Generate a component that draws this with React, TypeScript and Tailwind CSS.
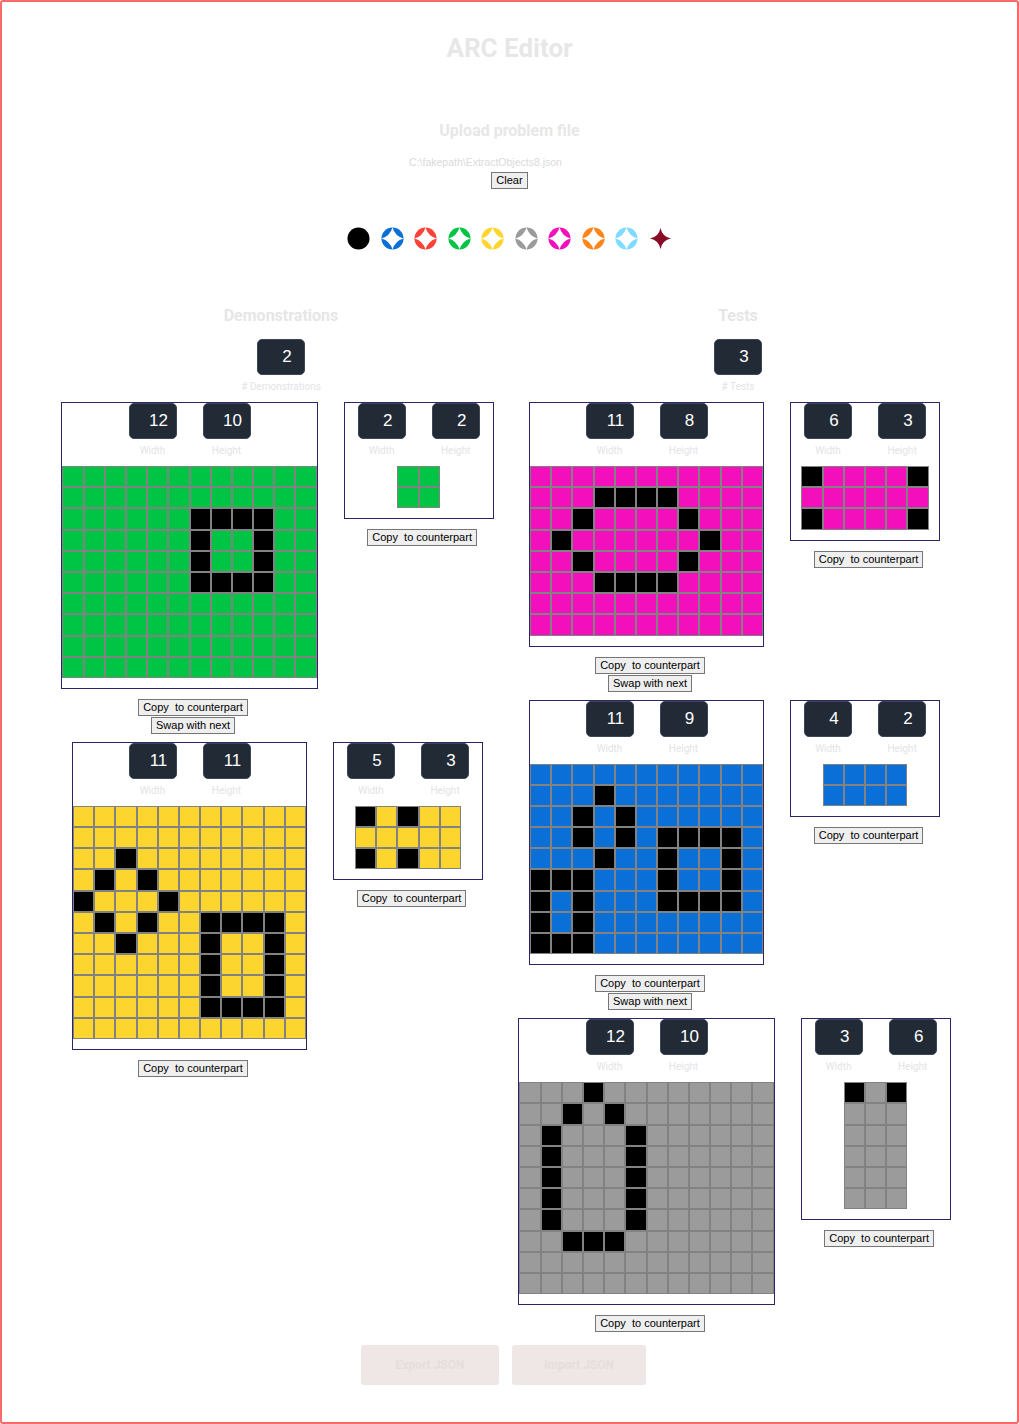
import { ReactNode } from "react";

const COLOR: Record<string, string> = {
  "0": "bg-black",
  "1": "bg-[#0a6fd6]",
  "3": "bg-[#00c443]",
  "4": "bg-[#fdd52f]",
  "5": "bg-[#9b9b9b]",
  "6": "bg-[#f30fbc]",
};

const fill = (w: number, h: number, c: string) =>
  Array.from({ length: h }, () => c.repeat(w));

const demos = [
  {
    input: [
      "333333333333",
      "333333333333",
      "333333000033",
      "333333033033",
      "333333033033",
      "333333000033",
      ...fill(12, 4, "3"),
    ],
    output: fill(2, 2, "3"),
  },
  {
    input: [
      "44444444444",
      "44444444444",
      "44044444444",
      "40404444444",
      "04440444444",
      "40404400004",
      "44044404404",
      "44444404404",
      "44444404404",
      "44444400004",
      "44444444444",
    ],
    output: ["04044", "44444", "04044"],
  },
];

const tests = [
  {
    input: [
      "66666666666",
      "66600006666",
      "66066660666",
      "60666666066",
      "66066660666",
      "66600006666",
      "66666666666",
      "66666666666",
    ],
    output: ["066660", "666666", "066660"],
  },
  {
    input: [
      "11111111111",
      "11101111111",
      "11010111111",
      "11010100001",
      "11101101101",
      "00011101101",
      "01011100001",
      "01011111111",
      "00011111111",
    ],
    output: fill(4, 2, "1"),
  },
  {
    input: [
      "555055555555",
      "550505555555",
      "505550555555",
      "505550555555",
      "505550555555",
      "505550555555",
      "505550555555",
      "550005555555",
      "555555555555",
      "555555555555",
    ],
    output: ["050", ...fill(3, 5, "5")],
  },
];

const palette = [
  { color: "#000000", kind: "solid" },
  { color: "#0a6fd6", kind: "ring" },
  { color: "#ff4136", kind: "ring" },
  { color: "#00c443", kind: "ring" },
  { color: "#fdd52f", kind: "ring" },
  { color: "#9b9b9b", kind: "ring" },
  { color: "#f30fbc", kind: "ring" },
  { color: "#ff851b", kind: "ring" },
  { color: "#7fdbff", kind: "ring" },
  { color: "#870c25", kind: "star" },
];

const STAR = "M12 0.5 Q14.6 9.4 23.5 12 Q14.6 14.6 12 23.5 Q9.4 14.6 0.5 12 Q9.4 9.4 12 0.5 Z";
const STAR_SOLID = "M12 1 Q13.8 10.2 23 12 Q13.8 13.8 12 23 Q10.2 13.8 1 12 Q10.2 10.2 12 1 Z";

const Swatch = ({ color, kind }: { color: string; kind: string }) => (
  <svg viewBox="0 0 24 24" className="w-[23px] h-[23px]">
    {kind !== "star" && <circle cx="12" cy="12" r="11.5" fill={color} />}
    {kind === "ring" && <path d={STAR} fill="#ffffff" />}
    {kind === "star" && <path d={STAR_SOLID} fill={color} />}
  </svg>
);

const NumBox = ({ value }: { value: number }) => (
  <input
    readOnly
    value={value}
    className="block w-[48px] h-[36px] rounded-[5px] bg-[#222a36] border border-[#3b4657] text-white text-[17px] text-center pl-3 font-['Liberation_Sans',sans-serif] outline-none"
  />
);

const Label = ({ children }: { children: ReactNode }) => (
  <span className="block text-[10px] leading-[12px] text-[#e3e4e6] font-['Roboto',sans-serif]">
    {children}
  </span>
);

const SmallButton = ({ children }: { children: ReactNode }) => (
  <button className="block h-[17px] px-[4px] text-[11px] leading-[13px] bg-[#efefef] border border-[#767676] text-black font-['Liberation_Sans',sans-serif] whitespace-pre">
    {children}
  </button>
);

const Grid = ({ rows }: { rows: string[] }) => (
  <div className="flex flex-col">
    {rows.map((row, y) => (
      <div key={y} className="flex">
        {row.split("").map((c, x) => (
          <div
            key={x}
            className={`w-[21.2px] h-[21.2px] border border-[#828282] ${COLOR[c]}`}
          />
        ))}
      </div>
    ))}
  </div>
);

const GridBox = ({ rows }: { rows: string[] }) => (
  <div className="min-w-[150px] border border-[#2b2566] bg-white flex flex-col items-center pb-[10px]">
    <div className="flex justify-center h-[63px]">
      <div className="w-[74px] flex flex-col items-center">
        <NumBox value={rows[0].length} />
        <div className="mt-[6px] flex">
          <Label>Width</Label>
        </div>
      </div>
      <div className="w-[74px] flex flex-col items-center">
        <NumBox value={rows.length} />
        <div className="mt-[6px] flex">
          <Label>Height</Label>
        </div>
      </div>
    </div>
    <Grid rows={rows} />
  </div>
);

interface PairProps {
  input: string[];
  output: string[];
  last: boolean;
}

const Pair = ({ input, output, last }: PairProps) => (
  <div className="flex items-start justify-center gap-[26px]">
    <div className="flex flex-col items-center">
      <GridBox rows={input} />
      <div className="mt-[10px] ml-[7px] flex flex-col items-center gap-[1px]">
        <SmallButton>Copy  to counterpart</SmallButton>
        {!last && <SmallButton>Swap with next</SmallButton>}
      </div>
    </div>
    <div className="flex flex-col items-center">
      <GridBox rows={output} />
      <div className="mt-[10px] ml-[7px] flex">
        <SmallButton>Copy  to counterpart</SmallButton>
      </div>
    </div>
  </div>
);

const Section = ({
  title,
  label,
  pairs,
}: {
  title: string;
  label: string;
  pairs: { input: string[]; output: string[] }[];
}) => (
  <div className="flex flex-col items-center">
    <h2 className="text-[16px] leading-[20px] font-bold text-[#e6e6e6]">{title}</h2>
    <div className="mt-[13px] flex">
      <NumBox value={pairs.length} />
    </div>
    <div className="mt-[6px] flex">
      <Label>{label}</Label>
    </div>
    <div className="mt-[9px] pr-[7px] flex flex-col gap-2">
      {pairs.map((p, i) => (
        <Pair key={i} input={p.input} output={p.output} last={i === pairs.length - 1} />
      ))}
    </div>
  </div>
);

export default function App() {
  return (
    <div className="min-h-screen border-2 border-[#f76a6a] rounded-[3px] bg-white font-['Roboto',sans-serif]">
      <div className="flex flex-col items-center pt-[31px]">
        <h1 className="text-[26px] leading-[30px] font-bold text-[#e7e7e7]">ARC Editor</h1>
        <h2 className="mt-[58px] text-[16px] leading-[20px] font-bold text-[#e7e7e7]">
          Upload problem file
        </h2>
        <p className="mt-[15px] pr-[48px] text-[10.5px] leading-[12px] text-[#dadada] font-['Liberation_Sans',sans-serif]">
          C:\fakepath\ExtractObjects8.json
        </p>
        <div className="mt-[4px] flex">
          <SmallButton>Clear</SmallButton>
        </div>
        <div className="mt-[38px] flex items-center gap-[10.5px]">
          {palette.map((p) => (
            <Swatch key={p.color} color={p.color} kind={p.kind} />
          ))}
        </div>
      </div>

      <div className="mt-[56px] mx-auto w-[914px] grid grid-cols-2 items-start">
        <Section title="Demonstrations" label="# Demonstrations" pairs={demos} />
        <Section title="Tests" label="# Tests" pairs={tests} />
      </div>

      <div className="mt-[13px] flex justify-center gap-[13px] pr-[12px]">
        <button className="w-[138px] h-[40px] rounded-[3px] bg-[#efe6e6] text-[12px] font-bold text-[#e6dddd]">
          Export JSON
        </button>
        <button className="w-[134px] h-[40px] rounded-[3px] bg-[#efe6e6] text-[12px] font-bold text-[#e6dddd]">
          Import JSON
        </button>
      </div>
    </div>
  );
}
